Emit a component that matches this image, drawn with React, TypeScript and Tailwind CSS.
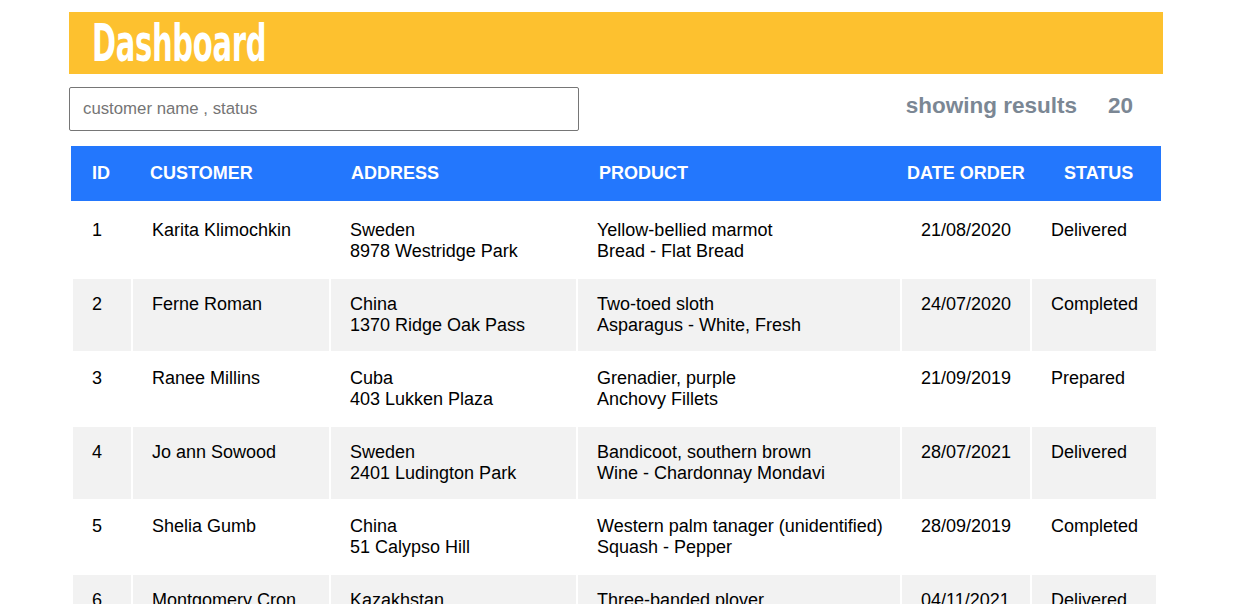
import React from 'react'

type Order = {
  id: number
  customer: string
  country: string
  street: string
  animal: string
  product: string
  date: string
  status: string
}

const orders: Order[] = [
  { id: 1, customer: 'Karita Klimochkin', country: 'Sweden', street: '8978 Westridge Park', animal: 'Yellow-bellied marmot', product: 'Bread - Flat Bread', date: '21/08/2020', status: 'Delivered' },
  { id: 2, customer: 'Ferne Roman', country: 'China', street: '1370 Ridge Oak Pass', animal: 'Two-toed sloth', product: 'Asparagus - White, Fresh', date: '24/07/2020', status: 'Completed' },
  { id: 3, customer: 'Ranee Millins', country: 'Cuba', street: '403 Lukken Plaza', animal: 'Grenadier, purple', product: 'Anchovy Fillets', date: '21/09/2019', status: 'Prepared' },
  { id: 4, customer: 'Jo ann Sowood', country: 'Sweden', street: '2401 Ludington Park', animal: 'Bandicoot, southern brown', product: 'Wine - Chardonnay Mondavi', date: '28/07/2021', status: 'Delivered' },
  { id: 5, customer: 'Shelia Gumb', country: 'China', street: '51 Calypso Hill', animal: 'Western palm tanager (unidentified)', product: 'Squash - Pepper', date: '28/09/2019', status: 'Completed' },
  { id: 6, customer: 'Montgomery Cron', country: 'Kazakhstan', street: '7 Oak Valley Court', animal: 'Three-banded plover', product: 'Pasta - Penne', date: '04/11/2021', status: 'Delivered' },
  { id: 7, customer: 'Abbe Tolworthy', country: 'Indonesia', street: '92 Hallows Lane', animal: 'Red-tailed hawk', product: 'Cheese - Brie', date: '12/03/2020', status: 'Prepared' },
]

const font = { fontFamily: '"Liberation Sans", Arial, sans-serif' }

function OrderRow({ order }: { order: Order }) {
  const bg = order.id % 2 === 0 ? 'bg-[#f2f2f2]' : 'bg-white'
  const cell = `h-[72px] shrink-0 pl-[19px] pt-[15px] ${bg}`
  return (
    <div className="flex gap-[2px] px-[4px] text-[18px] leading-[21px] text-black">
      <div className={`${cell} w-[58px]`}>{order.id}</div>
      <div className={`${cell} w-[196px]`}>{order.customer}</div>
      <div className={`${cell} w-[245px]`}>
        <div>{order.country}</div>
        <div>{order.street}</div>
      </div>
      <div className={`${cell} w-[322px] pl-[18px]`}>
        <div>{order.animal}</div>
        <div>{order.product}</div>
      </div>
      <div className={`${cell} w-[128px]`}>{order.date}</div>
      <div className={`${cell} w-[124px]`}>{order.status}</div>
    </div>
  )
}

export default function App() {
  return (
    <div className="min-h-screen bg-white pt-[12px]" style={font}>
      <div className="ml-[69px] w-[1094px]">
        <div className="flex h-[62px] items-center bg-[#fdc12f] pl-[23px]">
          <h1
            className="origin-left scale-x-[0.62] text-[52px] font-bold leading-none tracking-[-0.5px] text-white"
            style={{ fontFamily: '"Liberation Sans Narrow", "DejaVu Sans Condensed", sans-serif' }}
          >
            Dashboard
          </h1>
        </div>

        <div className="mt-[13px] flex items-center justify-between pr-[30px]">
          <input
            type="text"
            placeholder="customer name , status"
            className="h-[44px] w-[510px] rounded-[2px] border border-[#767676] px-[13px] text-[16.8px] text-black outline-none placeholder:text-[#757575]"
          />
          <div className="mb-[6px] flex items-center gap-[31px] text-[22.5px] font-bold text-[#7b8794]">
            <span>showing results</span>
            <span>20</span>
          </div>
        </div>

        <div className="mt-[15px] px-[2px]">
          <div className="flex h-[55px] items-center bg-[#2377fd] pl-[21px] text-[18px] font-bold uppercase text-white">
            <div className="w-[58px] shrink-0">ID</div>
            <div className="w-[201px] shrink-0">Customer</div>
            <div className="w-[248px] shrink-0">Address</div>
            <div className="w-[308px] shrink-0">Product</div>
            <div className="w-[157px] shrink-0">Date Order</div>
            <div className="shrink-0">Status</div>
          </div>
        </div>

        <div className="mt-[4px] flex flex-col gap-[2px]">
          {orders.map((o) => (
            <OrderRow key={o.id} order={o} />
          ))}
        </div>
      </div>
    </div>
  )
}
